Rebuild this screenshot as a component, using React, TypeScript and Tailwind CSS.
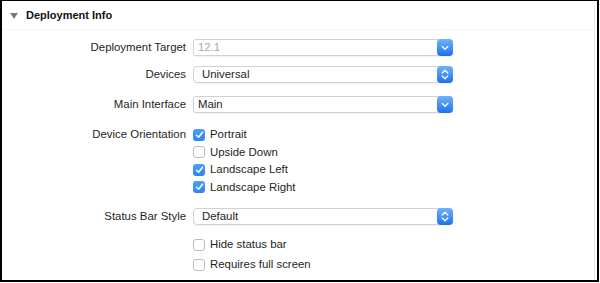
import React from "react";

const font = { fontFamily: '"Liberation Sans", Arial, sans-serif' };

function Chevron({ updown }: { updown?: boolean }) {
  if (updown) {
    return (
      <svg width="8" height="11" viewBox="0 0 8 11">
        <polyline points="1.2,4 4,1.3 6.8,4" fill="none" stroke="white" strokeWidth="1.3" strokeLinecap="round" strokeLinejoin="round" />
        <polyline points="1.2,7 4,9.7 6.8,7" fill="none" stroke="white" strokeWidth="1.3" strokeLinecap="round" strokeLinejoin="round" />
      </svg>
    );
  }
  return (
    <svg width="8" height="6" viewBox="0 0 8 6">
      <polyline points="1.2,1.5 4,4.3 6.8,1.5" fill="none" stroke="white" strokeWidth="1.3" strokeLinecap="round" strokeLinejoin="round" />
    </svg>
  );
}

function Select({ value, gray, updown }: { value: string; gray?: boolean; updown?: boolean }) {
  return (
    <div className={`relative flex h-[17px] w-[260px] items-center border border-[#d2d2d2] bg-white shadow-[0_1px_1px_rgba(0,0,0,0.06)] ${updown ? "rounded-[4px] pl-[8px]" : "rounded-[3px] pl-[4px]"}`}>
      <span className={`text-[11.4px] leading-none ${gray ? "text-[#a8a8a8]" : "text-[#1e1e1e]"}`}>{value}</span>
      <div className="absolute right-[-1px] top-[-1px] flex h-[17px] w-[16px] items-center justify-center rounded-[4px] bg-gradient-to-b from-[#6db4fb] to-[#1f6fec]">
        <Chevron updown={updown} />
      </div>
    </div>
  );
}

function Check({ checked, label }: { checked?: boolean; label: string }) {
  return (
    <div className="flex items-center">
      {checked ? (
        <div className="flex h-[12px] w-[12px] items-center justify-center rounded-[3px] bg-gradient-to-b from-[#4e9ff8] to-[#2f83f2]">
          <svg width="9" height="8" viewBox="0 0 9 8">
            <polyline points="1.5,4.2 3.6,6.3 7.5,1.3" fill="none" stroke="white" strokeWidth="1.5" strokeLinecap="round" strokeLinejoin="round" />
          </svg>
        </div>
      ) : (
        <div className="h-[12px] w-[12px] rounded-[3px] border border-[#bdbdbd] bg-white" />
      )}
      <span className="ml-[5px] text-[11.4px] leading-none text-[#1e1e1e]">{label}</span>
    </div>
  );
}

function Row({ label, children, className }: { label?: string; children: React.ReactNode; className?: string }) {
  return (
    <div className={`flex items-center ${className ?? ""}`}>
      <div className="w-[184px] text-right text-[11.4px] leading-none text-[#1e1e1e]">{label}</div>
      <div className="ml-[7px] flex items-center">{children}</div>
    </div>
  );
}

export default function App() {
  return (
    <div className="h-[283px] w-[600px] bg-white" style={font}>
      <div className="h-[282px] w-[599px] border-t border-l-2 border-r-2 border-b-2 border-black">
        <div className="h-full w-[593px] border-r border-[#ececec]">
          <div className="flex h-[29px] items-center border-b border-[#f5f5f5] pl-[8px]">
            <svg width="8" height="6" viewBox="0 0 8 6" className="mt-[1px]">
              <polygon points="0,0 8,0 4,6" fill="#7a7a7a" />
            </svg>
            <span className="ml-[8px] text-[11px] font-bold leading-none text-[#111111]">Deployment Info</span>
          </div>

          <Row label="Deployment Target" className="mt-[9px] h-[17px]">
            <Select value="12.1" gray />
          </Row>
          <Row label="Devices" className="mt-[10px] h-[17px]">
            <Select value="Universal" updown />
          </Row>
          <Row label="Main Interface" className="mt-[13px] h-[17px]">
            <Select value="Main" />
          </Row>

          <div className="mt-[13px] flex flex-col">
            <Row label="Device Orientation" className="h-[17.5px]">
              <Check checked label="Portrait" />
            </Row>
            <Row className="h-[17.5px]">
              <Check label="Upside Down" />
            </Row>
            <Row className="h-[17.5px]">
              <Check checked label="Landscape Left" />
            </Row>
            <Row className="h-[17.5px]">
              <Check checked label="Landscape Right" />
            </Row>
          </div>

          <Row label="Status Bar Style" className="mt-[12px] h-[17px]">
            <Select value="Default" updown />
          </Row>
          <Row className="mt-[11px] h-[18px]">
            <Check label="Hide status bar" />
          </Row>
          <Row className="mt-[2px] h-[18px]">
            <Check label="Requires full screen" />
          </Row>
        </div>
      </div>
    </div>
  );
}
